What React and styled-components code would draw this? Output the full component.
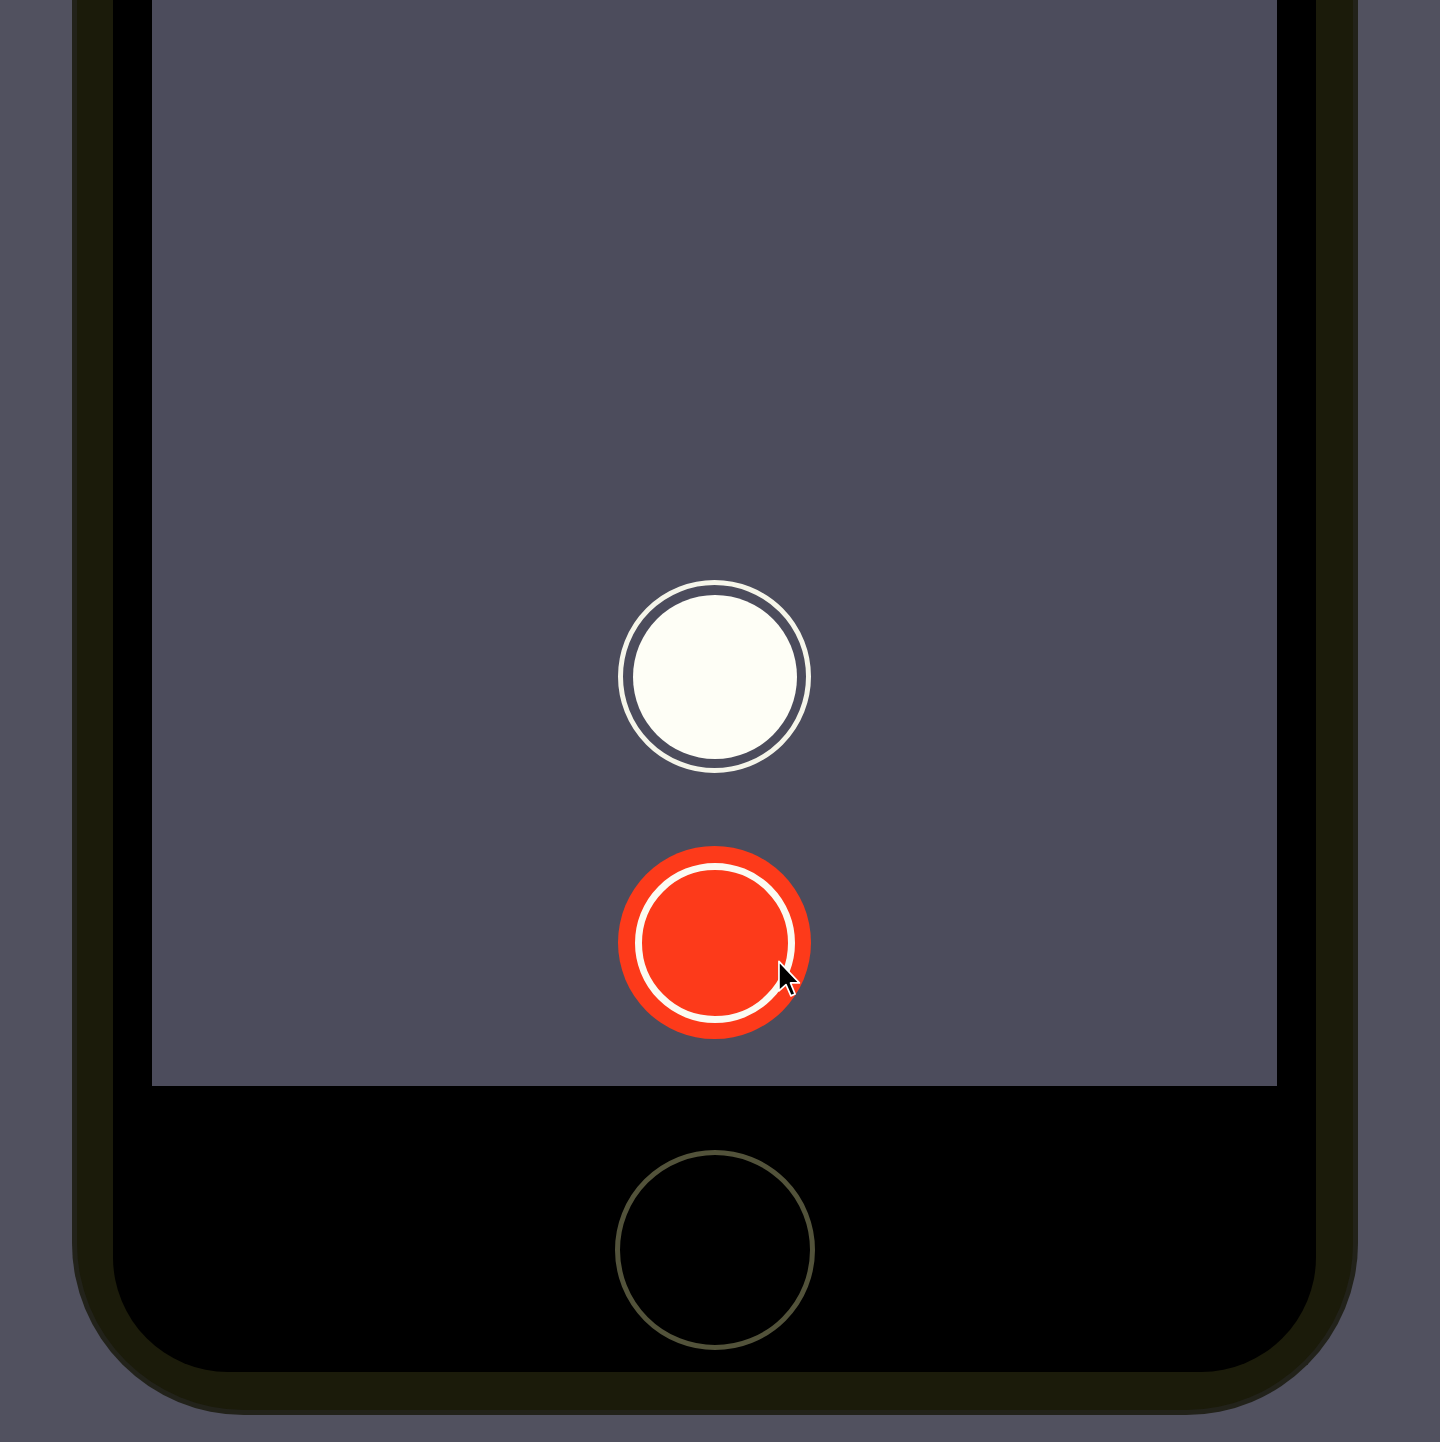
import React from 'react'
import styled, { createGlobalStyle } from 'styled-components'

const Global = createGlobalStyle`
    html, body {
        margin: 0;
        padding: 0;
        background: #51515f;
        font-family: "Liberation Sans", Arial, sans-serif;
    }
    #root {
        width: 1440px;
        height: 1442px;
        overflow: hidden;
    }
`

const Page = styled.div`
    width: 1440px;
    height: 1442px;
    display: flex;
    justify-content: flex-start;
    padding-left: 72px;
    box-sizing: border-box;
`

const Frame = styled.div`
    width: 1286px;
    height: 1415px;
    box-sizing: border-box;
    padding: 0 37px 38px 36px;
    background: #1b1b0a;
    border: 5px solid #22221a;
    border-top: none;
    border-radius: 0 0 172px 172px;
    display: flex;
`

const Bezel = styled.div`
    flex: 1;
    background: #000;
    border-radius: 0 0 115px 115px;
    display: flex;
    flex-direction: column;
    align-items: center;
`

const Screen = styled.div`
    position: relative;
    width: 1125px;
    height: 1086px;
    background: #4c4c5c;
    display: flex;
    flex-direction: column;
    align-items: center;
    justify-content: flex-end;
    gap: 73px;
    padding-bottom: 47px;
    box-sizing: border-box;
`

const ShutterButton = styled.div`
    width: 193px;
    height: 193px;
    border-radius: 50%;
    box-sizing: border-box;
    display: flex;
    align-items: center;
    justify-content: center;
    background: ${p => (p.$recording ? '#fd3a1a' : 'transparent')};
    border: ${p => (p.$recording ? 'none' : '5px solid #f6f6ea')};
`

const ShutterInner = styled.div`
    box-sizing: border-box;
    border-radius: 50%;
    width: ${p => (p.$recording ? '160px' : '164px')};
    height: ${p => (p.$recording ? '160px' : '164px')};
    background: ${p => (p.$recording ? '#fd3a1a' : '#fefef6')};
    border: ${p => (p.$recording ? '7px solid #fbfbf2' : 'none')};
`

const Cursor = styled.svg`
    position: absolute;
    left: 625px;
    top: 960px;
    width: 25px;
    height: 38px;
`

const HomeArea = styled.div`
    flex: 1;
    display: flex;
    align-items: flex-start;
    justify-content: center;
    padding-top: 64px;
`

const HomeButton = styled.div`
    width: 200px;
    height: 200px;
    border-radius: 50%;
    box-sizing: border-box;
    border: 5px solid #52523a;
`

export default function App() {
    return (
        <>
            <Global />
            <Page>
                <Frame>
                    <Bezel>
                        <Screen>
                            <ShutterButton>
                                <ShutterInner />
                            </ShutterButton>
                            <ShutterButton $recording>
                                <ShutterInner $recording />
                            </ShutterButton>
                            <Cursor viewBox="0 0 17 27">
                                <path d="M1 1 L1 22 L6 17.5 L9.5 25.5 L12.5 24.2 L9.2 16.3 L15.5 16.3 Z" fill="#000" stroke="#fff" strokeWidth="1.2" strokeLinejoin="round" />
                            </Cursor>
                        </Screen>
                        <HomeArea>
                            <HomeButton />
                        </HomeArea>
                    </Bezel>
                </Frame>
            </Page>
        </>
    )
}
